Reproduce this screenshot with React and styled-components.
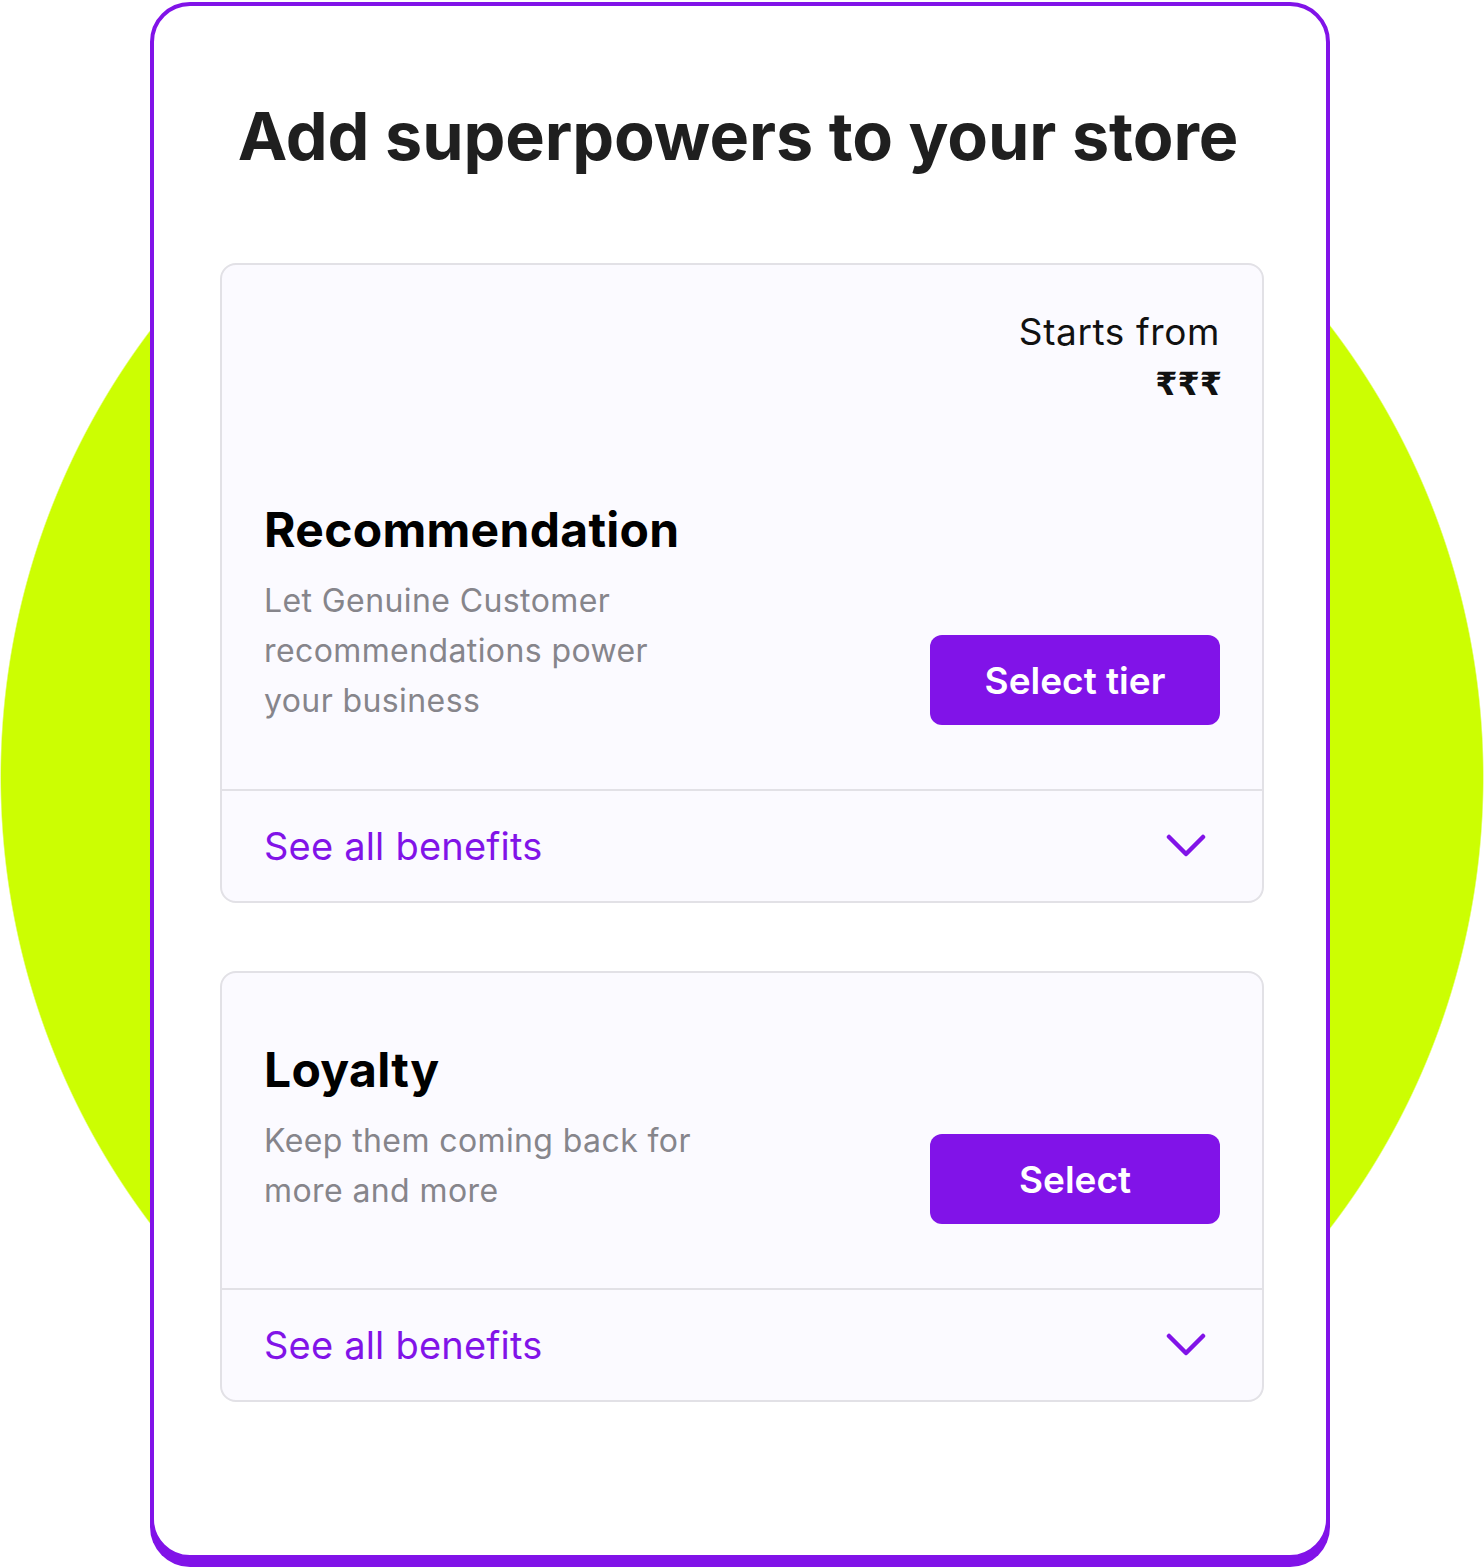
import React from 'react'
import styled, { createGlobalStyle } from 'styled-components'

const Global = createGlobalStyle`
  * { box-sizing: border-box; }
  body {
    margin: 0;
    background: #fff;
    font-family: Inter, "Noto Sans", "DejaVu Sans", sans-serif;
  }
`

const purple = '#8113e8'

const Stage = styled.div`
  width: 1484px;
  height: 1568px;
  padding: 2px 0 0 150px;
  background: radial-gradient(circle 742px at 742px 777px, #ccfe02 99.8%, transparent 100%);
`

const Frame = styled.section`
  width: 1180px;
  height: 1557px;
  background: #fff;
  border: 4px solid ${purple};
  border-radius: 40px;
  box-shadow: 0 8px 0 0 ${purple};
  padding: 0 62px 0 66px;
  display: flex;
  flex-direction: column;
`

const Heading = styled.h1`
  margin: 0;
  padding: 91px 8px 0 0;
  text-align: center;
  font-size: 66.5px;
  line-height: 78px;
  font-weight: 700;
  color: #1f1f1f;
  letter-spacing: -0.1px;
`

const Stack = styled.div`
  margin-top: 88px;
  display: flex;
  flex-direction: column;
  gap: 68px;
`

const Tier = styled.article`
  background: #fbfaff;
  border: 2px solid #e2e1e6;
  border-radius: 16px;
`

const Body = styled.div`
  padding: ${p => p.$top}px 42px 64px 42px;
`

const Price = styled.div`
  text-align: right;
  color: #111;
  margin-bottom: 97px;
`

const PriceLabel = styled.div`
  font-size: 37px;
  line-height: 42px;
  letter-spacing: 0.6px;
`

const PriceValue = styled.div`
  font-size: 32px;
  line-height: 42px;
  font-weight: 800;
  margin-top: 10px;
  margin-right: -2px;
  font-family: "DejaVu Sans", Inter, sans-serif;
`

const Row = styled.div`
  display: flex;
  align-items: flex-end;
  justify-content: space-between;
`

const Info = styled.div`
  max-width: ${p => p.$w}px;
  margin-bottom: ${p => p.$lift}px;
`

const Name = styled.h2`
  margin: 0 0 18px;
  font-size: 48px;
  line-height: 56px;
  font-weight: 700;
  color: #000;
  letter-spacing: 0.3px;
`

const Blurb = styled.p`
  margin: 0;
  font-size: 32px;
  line-height: 50px;
  color: #86858b;
  letter-spacing: 0.4px;
`

const Button = styled.button`
  flex: none;
  width: 290px;
  height: 90px;
  border: none;
  border-radius: 12px;
  background: ${purple};
  color: #fff;
  font-family: inherit;
  font-size: 37px;
  font-weight: 600;
  cursor: pointer;
`

const Footer = styled.div`
  border-top: 2px solid #e2e1e6;
  height: 112px;
  padding: 0 56px 0 42px;
  display: flex;
  align-items: center;
  justify-content: space-between;
`

const Benefits = styled.span`
  font-size: 38px;
  color: ${purple};
  letter-spacing: 0.2px;
`

function Chevron() {
  return (
    <svg width="40" height="24" viewBox="0 0 40 24" fill="none">
      <path d="M3 3 L20 20 L37 3" stroke={purple} strokeWidth="4.5" strokeLinecap="round" strokeLinejoin="round" />
    </svg>
  )
}

function TierCard({ name, blurb, action, price, top, width, lift }) {
  return (
    <Tier>
      <Body $top={top}>
        {price && (
          <Price>
            <PriceLabel>Starts from</PriceLabel>
            <PriceValue>{price}</PriceValue>
          </Price>
        )}
        <Row>
          <Info $w={width} $lift={lift}>
            <Name>{name}</Name>
            <Blurb>{blurb}</Blurb>
          </Info>
          <Button>{action}</Button>
        </Row>
      </Body>
      <Footer>
        <Benefits>See all benefits</Benefits>
        <Chevron />
      </Footer>
    </Tier>
  )
}

export default function App() {
  return (
    <Stage>
      <Global />
      <Frame>
        <Heading>Add superpowers to your store</Heading>
        <Stack>
          <TierCard
            top={46}
            price="₹₹₹"
            name="Recommendation"
            blurb="Let Genuine Customer recommendations power your business"
            action="Select tier"
            width={420}
            lift={-1}
          />
          <TierCard
            top={69}
            name="Loyalty"
            blurb="Keep them coming back for more and more"
            action="Select"
            width={470}
            lift={8}
          />
        </Stack>
      </Frame>
    </Stage>
  )
}
